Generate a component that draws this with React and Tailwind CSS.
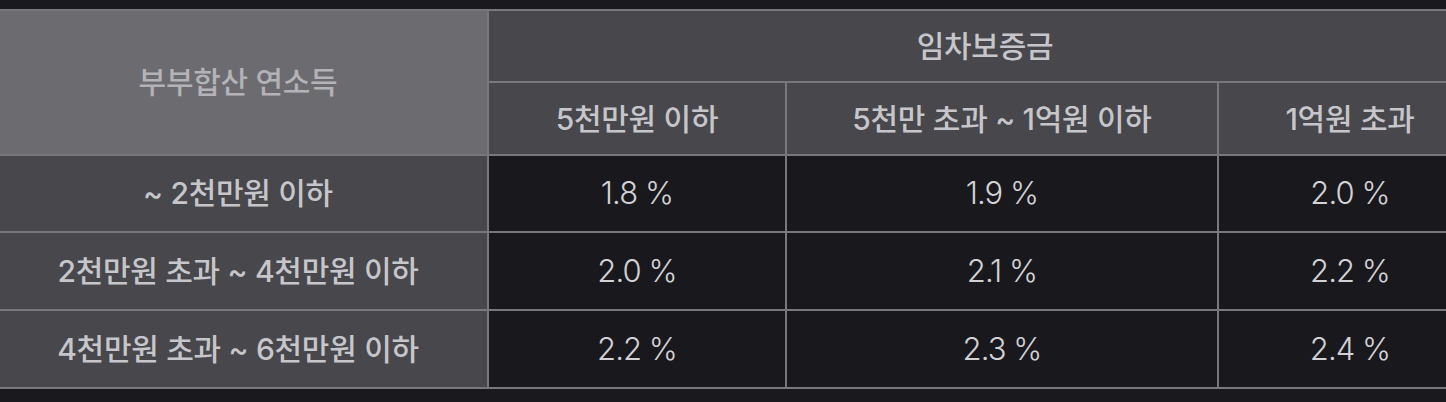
import { Fragment } from "react";

const font = { fontFamily: 'Inter, "Noto Sans CJK KR", sans-serif' };

const rows = [
  { label: "~ 2천만원 이하", rates: ["1.8 %", "1.9 %", "2.0 %"] },
  { label: "2천만원 초과 ~ 4천만원 이하", rates: ["2.0 %", "2.1 %", "2.2 %"] },
  { label: "4천만원 초과 ~ 6천만원 이하", rates: ["2.2 %", "2.3 %", "2.4 %"] },
];

export default function App() {
  return (
    <div className="w-[1446px] h-[402px] bg-[#1a191e] overflow-hidden pt-[9px]" style={font}>
      <div className="-ml-[11px] w-[1492px] grid grid-cols-[498px_296px_430px_262px] grid-rows-[70px_71px_75px_76px_76px] gap-[2px] py-[2px] bg-[#77777c]">
        {/* header */}
        <div className="row-span-2 bg-[#6b6b70] flex items-center justify-center text-[30px] font-medium text-[#b3b3b7] tracking-[-0.01em]">
          부부합산 연소득
        </div>
        <div className="col-span-3 bg-[#47474c] flex items-center justify-center text-[30px] font-medium text-[#c6c6ca] tracking-[-0.01em]">
          임차보증금
        </div>
        <div className="bg-[#47474c] flex items-center justify-center pt-[2px] text-[30px] font-medium text-[#c6c6ca] tracking-[-0.01em]">
          5천만원 이하
        </div>
        <div className="bg-[#47474c] flex items-center justify-center pt-[2px] text-[30px] font-medium text-[#c6c6ca] tracking-[-0.01em]">
          5천만 초과 ~ 1억원 이하
        </div>
        <div className="bg-[#47474c] flex items-center justify-center pt-[2px] text-[30px] font-medium text-[#c6c6ca] tracking-[-0.01em]">
          1억원 초과
        </div>

        {/* body */}
        {rows.map((row) => (
          <Fragment key={row.label}>
            <div className="bg-[#47474c] flex items-center justify-center text-[30px] font-medium text-[#c6c6ca] tracking-[-0.01em]">
              {row.label}
            </div>
            {row.rates.map((r, i) => (
              <div
                key={i}
                className="bg-[#19181d] flex items-center justify-center text-[31px] font-light text-[#d2d2d5] tracking-[-0.03em]"
              >
                {r}
              </div>
            ))}
          </Fragment>
        ))}
      </div>
    </div>
  );
}
